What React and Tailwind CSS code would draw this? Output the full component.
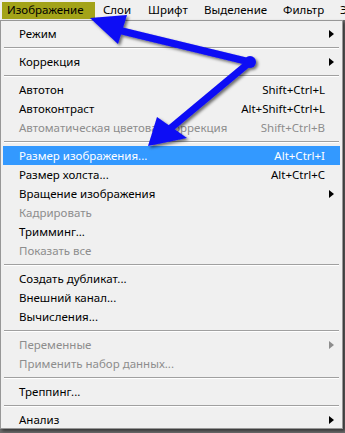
import React from "react";

const ITEMS = [
  { label: "Режим", sub: true },
  { sep: true },
  { label: "Коррекция", sub: true },
  { sep: true },
  { label: "Автотон", keys: "Shift+Ctrl+L" },
  { label: "Автоконтраст", keys: "Alt+Shift+Ctrl+L" },
  { label: "Автоматическая цветовая коррекция", keys: "Shift+Ctrl+B", off: true },
  { sep: true },
  { label: "Размер изображения...", keys: "Alt+Ctrl+I", active: true },
  { label: "Размер холста...", keys: "Alt+Ctrl+C" },
  { label: "Вращение изображения", sub: true },
  { label: "Кадрировать", off: true },
  { label: "Тримминг..." },
  { label: "Показать все", off: true },
  { sep: true },
  { label: "Создать дубликат..." },
  { label: "Внешний канал..." },
  { label: "Вычисления..." },
  { sep: true },
  { label: "Переменные", sub: true, off: true },
  { label: "Применить набор данных...", off: true },
  { sep: true },
  { label: "Треппинг..." },
  { sep: true },
  { label: "Анализ", sub: true },
];

function Arrow({ color }) {
  return (
    <svg width="5" height="8" viewBox="0 0 5 8" className="shrink-0">
      <path d="M0 0 L5 4 L0 8 Z" fill={color} />
    </svg>
  );
}

function MenuRow({ item }) {
  if (item.sep) {
    return (
      <div className="h-[9px] flex items-center px-[3px]">
        <div className="w-full h-[2px] border-t border-[#a0a0a0] border-b border-b-white" />
      </div>
    );
  }
  const text = item.active ? "text-white" : item.off ? "text-[#8d8d8d]" : "text-black";
  return (
    <div
      className={`h-[19px] flex items-center pl-[16px] pr-[6px] mx-[2px] ${
        item.active ? "bg-[#3399ff]" : ""
      } ${text}`}
    >
      <span className="flex-1 whitespace-nowrap">{item.label}</span>
      {item.keys && <span className="whitespace-nowrap mr-[9px]">{item.keys}</span>}
      {item.sub && <Arrow color={item.off ? "#8d8d8d" : "#000"} />}
    </div>
  );
}

function Pointers() {
  return (
    <svg className="absolute inset-0 pointer-events-none" width="345" height="433" viewBox="0 0 345 433">
      <defs>
        <filter id="sh" x="-20%" y="-20%" width="140%" height="140%">
          <feDropShadow dx="2" dy="2" stdDeviation="1.5" floodColor="#000" floodOpacity="0.55" />
        </filter>
      </defs>
      <g filter="url(#sh)" fill="#0a0af5" stroke="#0a0af5">
        <line x1="250" y1="62" x2="118" y2="30" strokeWidth="7" strokeLinecap="round" />
        <line x1="250" y1="62" x2="166" y2="132" strokeWidth="7" strokeLinecap="round" />
        <circle cx="250" cy="62" r="6" stroke="none" />
        <path d="M90 18 L127 15 L118 44 Z" stroke="none" />
        <path d="M148 146 L157 117 L187 138 Z" stroke="none" />
      </g>
    </svg>
  );
}

export default function App() {
  return (
    <div
      className="relative w-[345px] h-[433px] overflow-hidden bg-[#6d6d6d] text-[11.5px] leading-none"
      style={{ fontFamily: '"Noto Sans", "Segoe UI", sans-serif' }}
    >
      <div className="h-[20px] flex items-center bg-[#f0f0f0] text-black whitespace-nowrap">
        <div className="h-[17px] ml-[2px] w-[93px] shrink-0 flex items-center pl-[5px] bg-[#a3a318]">Изображение</div>
        <span className="ml-[8px] w-[45px] shrink-0">Слои</span>
        <span className="w-[56px] shrink-0">Шрифт</span>
        <span className="w-[79px] shrink-0">Выделение</span>
        <span className="w-[57px] shrink-0">Фильтр</span>
        <span className="shrink-0">Э</span>
      </div>
      <div className="w-[343px] h-[409px] bg-[#f0f0f0] border border-[#979797] pt-[3px] shadow-[2px_2px_3px_rgba(0,0,0,0.5)]">
        {ITEMS.map((item, i) => (
          <MenuRow key={i} item={item} />
        ))}
      </div>
      <Pointers />
    </div>
  );
}
